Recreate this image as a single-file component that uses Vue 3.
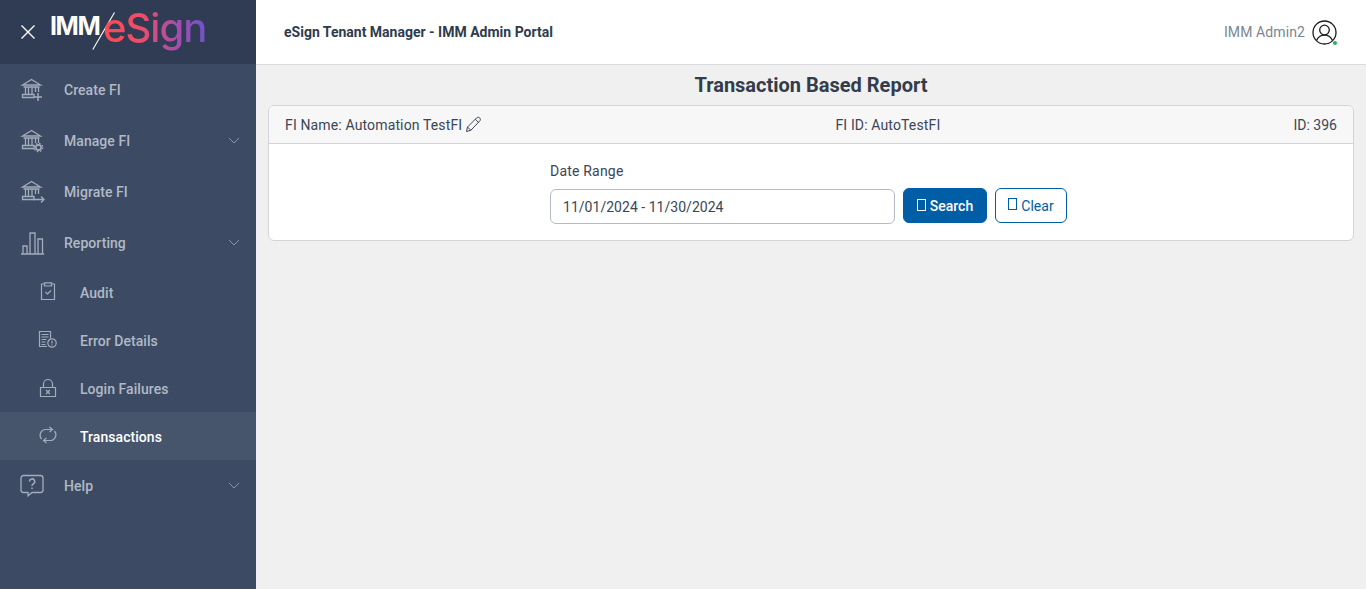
<script setup>
const top = [
  { label: 'Create FI', icon: 'create' },
  { label: 'Manage FI', icon: 'manage', chevron: true },
  { label: 'Migrate FI', icon: 'migrate' },
  { label: 'Reporting', icon: 'chart', chevron: true }
]
const subs = [
  { label: 'Audit', icon: 'audit' },
  { label: 'Error Details', icon: 'error' },
  { label: 'Login Failures', icon: 'lock' },
  { label: 'Transactions', icon: 'sync', active: true }
]
</script>

<template>
  <div class="page">
    <aside class="sidebar">
      <div class="brand">
        <svg class="close" width="16" height="16" viewBox="0 0 16 16" fill="none" stroke="#fff" stroke-width="1.4"><path d="M1.500 1.500l13 13M14.500 1.500l-13 13" /></svg>
        <div class="logo">
          <span class="imm">IMM</span>
          <svg class="slash" width="24" height="39" viewBox="0 0 24 39"><path d="M22.500 .5L.8 37.500" stroke="#fff" stroke-width="1.100" fill="none" /></svg>
          <span class="esign">eSign</span>
        </div>
      </div>
      <nav class="menu">
        <a v-for="item in top" :key="item.label" class="item">
          <svg class="ic" width="26" height="26" viewBox="0 0 26 26" fill="none" stroke="#a3acbb" stroke-width="1.300">
            <template v-if="item.icon === 'chart'">
              <path d="M2 24h23M4 24v-8h4v8M11 24V3h5v21M19 24V9h4.500v15" />
            </template>
            <template v-else>
              <path d="M3.500 8L12.500 2.500l9 5.500zM4.500 10h16M6.500 10v7M9.500 10v7M13 10v7M16.500 10v5M19.500 10v5M3.500 17.500h11.500v3H3.500z" />
              <path v-if="item.icon === 'create'" d="M19 16v8M15 20h8" stroke-width="1.500" />
              <g v-if="item.icon === 'manage'"><circle cx="19.500" cy="19.500" r="2.600" stroke-width="1.600" /><circle cx="19.500" cy="19.500" r="4.200" stroke-width="1.200" stroke-dasharray="1.600 1.700" /></g>
              <path v-if="item.icon === 'migrate'" d="M14 20.500h11M22 17.500l3 3-3 3" />
            </template>
          </svg>
          <span class="label">{{ item.label }}</span>
          <svg v-if="item.chevron" class="chev" width="12" height="7" viewBox="0 0 12 7" fill="none" stroke="#8a95a6"><path d="M1 1l5 5 5-5" /></svg>
        </a>
        <a v-for="sub in subs" :key="sub.label" class="sub" :class="{ active: sub.active }">
          <svg class="ic-sub" width="20" height="20" viewBox="0 0 20 20" fill="none" stroke="#a3acbb" stroke-width="1.200">
            <template v-if="sub.icon === 'audit'"><path d="M6.500 2H3.500v15.500h13V2h-3M6.500 .8h7V4h-7zM7.500 10l2 2 3.500-3.500" /></template>
            <template v-if="sub.icon === 'error'"><path d="M12.500 8.500V1.500H1.500v15h7.500M3.500 4.500h7M3.500 7h7M3.500 9.500h5M3.500 12h4M3.500 14.500h4" /><circle cx="14" cy="13" r="4.200" /><path d="M14 10.800v2.800M14 14.500v.9" /></template>
            <template v-if="sub.icon === 'lock'"><path d="M2.500 9.500h15v9h-15zM5.500 9.500V6a4.500 4.500 0 0 1 9 0v3.500M8 12l3.800 4M11.800 12L8 16" /></template>
            <template v-if="sub.icon === 'sync'"><path d="M3.500 13A5.800 5.800 0 0 1 7 3.500h7.500M11.500 1l3 2.500-3 2.500M16.500 5a5.800 5.800 0 0 1-3.500 9.500H5.500M8.500 12l-3 2.500 3 2.500" /></template>
          </svg>
          <span class="label">{{ sub.label }}</span>
        </a>
        <a class="item">
          <svg class="ic" width="26" height="26" viewBox="0 0 26 26" fill="none" stroke="#a3acbb" stroke-width="1.300"><path d="M4.500 2.500h17a2.500 2.500 0 0 1 2.500 2.500v12a2.500 2.500 0 0 1-2.500 2.500H13l-4 3.300v-3.300H4.500A2.500 2.500 0 0 1 2 17V5a2.500 2.500 0 0 1 2.500-2.500z" /><path d="M10.500 8.500a2.600 2.600 0 1 1 3.800 2.300c-.9.500-1.300 1-1.300 2.200M13 14.500v1.500" stroke-width="1.500" /></svg>
          <span class="label">Help</span>
          <svg class="chev" width="12" height="7" viewBox="0 0 12 7" fill="none" stroke="#8a95a6"><path d="M1 1l5 5 5-5" /></svg>
        </a>
      </nav>
    </aside>
    <main class="main">
      <header class="topbar">
        <strong class="portal">eSign Tenant Manager - IMM Admin Portal</strong>
        <div class="user">
          <span class="uname">IMM Admin2</span>
          <span class="avatar">
            <svg width="25" height="25" viewBox="0 0 25 25" fill="none" stroke="#1b1b1b" stroke-width="1.300"><circle cx="12.500" cy="12.500" r="11.500" /><circle cx="12.500" cy="10" r="4.800" /><path d="M4.500 20.500c1.500-3.500 4.500-5.300 8-5.300s6.500 1.800 8 5.300" /></svg>
            <i class="dot"></i>
          </span>
        </div>
      </header>
      <h1 class="title">Transaction Based Report</h1>
      <section class="card">
        <div class="card-head">
          <div class="fi-name">
            <span>FI Name: Automation TestFI</span>
            <svg width="17" height="17" viewBox="0 0 17 17" fill="none" stroke="#3a4657" stroke-width="1"><path d="M1.500 15.500l1-4.500L11.500 2c1-1 2.300-1 3.200-.1s.9 2.200-.1 3.200L5.800 14.300zM2.500 11l3.300 3.300M10.300 3.200l3.400 3.400" /></svg>
          </div>
          <div>FI ID: AutoTestFI</div>
          <div class="rec-id">ID: 396</div>
        </div>
        <div class="card-body">
          <label class="field-label">Date Range</label>
          <div class="row">
            <input class="date" value="11/01/2024 - 11/30/2024" />
            <button class="btn primary"><i class="tofu"></i> Search</button>
            <button class="btn outline"><i class="tofu up"></i> Clear</button>
          </div>
        </div>
      </section>
    </main>
  </div>
</template>

<style>
html, body { margin: 0; }
</style>

<style scoped>
.page {
  display: flex;
  height: 589px;
  overflow: hidden;
  font-family: Roboto, "Liberation Sans", sans-serif;
  background: #f0f0f0;
}
.sidebar {
  width: 256px;
  flex: none;
  background: #3c4b63;
  display: flex;
  flex-direction: column;
}
.brand {
  height: 64px;
  background: #2f3c54;
  display: flex;
  align-items: center;
  padding-left: 20px;
  box-sizing: border-box;
}
.close { flex: none; }
.logo {
  display: flex;
  align-items: center;
  margin-left: 14px;
  height: 64px;
}
.imm {
  color: #fff;
  font-size: 25px;
  font-weight: 700;
  letter-spacing: -1.4px;
  margin-top: -13px;
  width: 50px;
  font-family: Inter, Roboto, sans-serif;
}
.slash { margin-left: -8px; margin-top: -2px; flex: none; }
.esign {
  margin-left: -13px;
  margin-top: -5px;
  font-size: 40px;
  line-height: 44px;
  font-weight: 500;
  letter-spacing: -1px;
  font-family: Inter, Roboto, sans-serif;
  background: linear-gradient(90deg, #fb4a52 0%, #ef4d68 35%, #a64fa8 70%, #6f52cc 100%);
  -webkit-background-clip: text;
  background-clip: text;
  color: transparent;
  padding-bottom: 4px;
}
.menu { display: flex; flex-direction: column; }
.item {
  height: 51px;
  display: flex;
  align-items: center;
  padding-left: 19px;
  position: relative;
  color: #b1b9c6;
  font-size: 14px;
  font-weight: 500;
  letter-spacing: .05px;
}
.item .label { margin-left: 19px; }
.ic { flex: none; }
.chev { position: absolute; right: 16px; top: 22px; }
.sub {
  height: 48px;
  display: flex;
  align-items: center;
  padding-left: 38px;
  color: #b1b9c6;
  font-size: 14px;
  font-weight: 500;
  letter-spacing: .05px;
}
.sub .label { margin-left: 22px; padding-top: 2px; }
.ic-sub { flex: none; }
.sub.active { background: #46556c; color: #fff; }
.main { flex: 1; min-width: 0; display: flex; flex-direction: column; }
.topbar {
  height: 65px;
  box-sizing: border-box;
  background: #fff;
  border-bottom: 1px solid #d8dade;
  display: flex;
  align-items: center;
  justify-content: space-between;
  padding: 0 29px 0 28px;
  flex: none;
}
.portal { font-size: 14px; font-weight: 700; color: #2f3b4c; }
.user { display: flex; align-items: center; gap: 7px; color: #7d8590; font-size: 14px; }
.uname { letter-spacing: .1px; }
.avatar { position: relative; width: 25px; height: 25px; display: block; margin-top: 1px; }
.avatar svg { display: block; }
.dot {
  position: absolute;
  right: 0;
  bottom: 0;
  width: 4px;
  height: 4px;
  border-radius: 50%;
  background: #22b35e;
}
.title {
  margin: 8px 0;
  height: 24px;
  line-height: 24px;
  text-align: center;
  font-size: 20px;
  font-weight: 700;
  color: #323c4b;
}
.card {
  margin: 0 12px;
  background: #fff;
  border: 1px solid #d2d4d8;
  border-radius: 6px;
  overflow: hidden;
}
.card-head {
  height: 38px;
  box-sizing: border-box;
  background: #f7f7f7;
  border-bottom: 1px solid #d2d4d8;
  display: flex;
  justify-content: space-between;
  align-items: center;
  padding: 0 16px;
  font-size: 14px;
  letter-spacing: .14px;
  color: #3a4657;
}
.rec-id { letter-spacing: 0; }
.fi-name { display: flex; align-items: center; gap: 3px; }
.card-body { height: 96px; padding: 18px 0 0 281px; box-sizing: border-box; }
.field-label { display: block; font-size: 14px; line-height: 18px; letter-spacing: .2px; color: #3a4657; margin-bottom: 8px; }
.row { display: flex; align-items: flex-start; gap: 8px; }
.date {
  width: 345px;
  height: 35px;
  box-sizing: border-box;
  margin-top: 1px;
  border: 1px solid #b6bac2;
  border-radius: 6px;
  padding: 0 12px;
  font: 400 14px Roboto, sans-serif;
  letter-spacing: .03px;
  color: #3a4657;
  background: #fff;
  outline: none;
}
.btn {
  height: 35px;
  box-sizing: border-box;
  border-radius: 6px;
  font: 500 14px Roboto, sans-serif;
  padding: 0;
  display: flex;
  align-items: center;
  justify-content: center;
  gap: 4px;
}
.tofu {
  display: block;
  width: 9px;
  height: 12px;
  box-sizing: border-box;
  border: 1px solid currentColor;
  margin-top: -2px;
}
.tofu.up { margin-top: -4px; }
.primary { width: 84px; background: #005ea6; border: 1px solid #005ea6; color: #fff; }
.outline { width: 72px; background: #fff; border: 1px solid #005ea6; color: #005ea6; font-weight: 400; }
</style>
